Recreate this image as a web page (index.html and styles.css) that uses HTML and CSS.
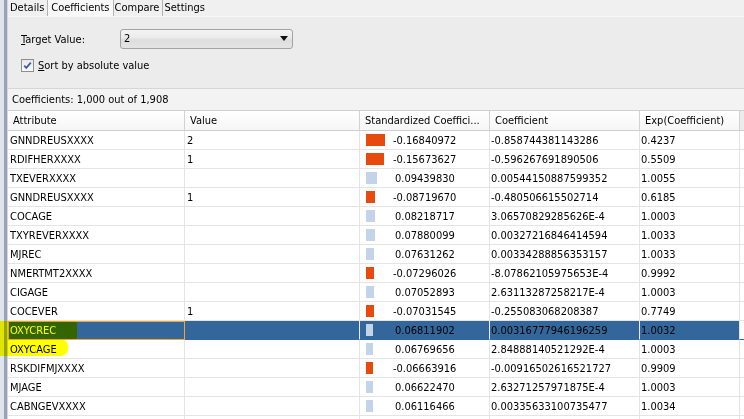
FILE: index.html
```html
<!DOCTYPE html>
<html>
<head>
<meta charset="utf-8">
<link rel="stylesheet" href="styles.css">
</head>
<body>
<div class="app">
  <div class="edge"></div>
  <div class="main">
    <div class="tabs">
      <div class="tab">Details</div>
      <div class="tab active">Coefficients</div>
      <div class="tab">Compare</div>
      <div class="tab">Settings</div>
    </div>
    <div class="options">
      <div class="target">
        <span class="label"><u>T</u>arget Value:</span>
        <div class="combo">
          <span class="combo-value">2</span>
          <svg class="combo-arrow" width="8" height="5" viewBox="0 0 8 5"><path d="M0 0H8L4 5Z" fill="#111"/></svg>
        </div>
      </div>
      <div class="sort">
        <span class="check">
          <svg width="11" height="11" viewBox="0 0 11 11"><path d="M2.2 5.6L4.3 7.8L8.8 2.6" fill="none" stroke="#3563a8" stroke-width="1.8"/></svg>
        </span>
        <span><u>S</u>ort by absolute value</span>
      </div>
    </div>
    <div class="summary">Coefficients: 1,000 out of 1,908</div>
    <div class="grid">
      <div class="row head">
        <div class="cell">Attribute</div>
        <div class="cell">Value</div>
        <div class="cell">Standardized Coeffici...</div>
        <div class="cell">Coefficient</div>
        <div class="cell">Exp(Coefficient)</div>
        <div class="cell fill"></div>
      </div>
      <div class="row">
        <div class="cell attr">GNNDREUSXXXX</div><div class="cell val">2</div>
        <div class="cell std"><span class="barbox"><span class="bar neg" style="width:19px"></span></span><span>-0.16840972</span></div>
        <div class="cell coef">-0.858744381143286</div><div class="cell exp">0.4237</div><div class="cell fill"></div>
      </div>
      <div class="row">
        <div class="cell attr">RDIFHERXXXX</div><div class="cell val">1</div>
        <div class="cell std"><span class="barbox"><span class="bar neg" style="width:18px"></span></span><span>-0.15673627</span></div>
        <div class="cell coef">-0.596267691890506</div><div class="cell exp">0.5509</div><div class="cell fill"></div>
      </div>
      <div class="row">
        <div class="cell attr">TXEVERXXXX</div><div class="cell val"></div>
        <div class="cell std"><span class="barbox"><span class="bar pos" style="width:11px"></span></span><span class="posnum">0.09439830</span></div>
        <div class="cell coef">0.00544150887599352</div><div class="cell exp">1.0055</div><div class="cell fill"></div>
      </div>
      <div class="row">
        <div class="cell attr">GNNDREUSXXXX</div><div class="cell val">1</div>
        <div class="cell std"><span class="barbox"><span class="bar neg" style="width:9px"></span></span><span>-0.08719670</span></div>
        <div class="cell coef">-0.480506615502714</div><div class="cell exp">0.6185</div><div class="cell fill"></div>
      </div>
      <div class="row">
        <div class="cell attr">COCAGE</div><div class="cell val"></div>
        <div class="cell std"><span class="barbox"><span class="bar pos" style="width:9px"></span></span><span class="posnum">0.08218717</span></div>
        <div class="cell coef">3.06570829285626E-4</div><div class="cell exp">1.0003</div><div class="cell fill"></div>
      </div>
      <div class="row">
        <div class="cell attr">TXYREVERXXXX</div><div class="cell val"></div>
        <div class="cell std"><span class="barbox"><span class="bar pos" style="width:9px"></span></span><span class="posnum">0.07880099</span></div>
        <div class="cell coef">0.00327216846414594</div><div class="cell exp">1.0033</div><div class="cell fill"></div>
      </div>
      <div class="row">
        <div class="cell attr">MJREC</div><div class="cell val"></div>
        <div class="cell std"><span class="barbox"><span class="bar pos" style="width:8px"></span></span><span class="posnum">0.07631262</span></div>
        <div class="cell coef">0.00334288856353157</div><div class="cell exp">1.0033</div><div class="cell fill"></div>
      </div>
      <div class="row">
        <div class="cell attr">NMERTMT2XXXX</div><div class="cell val"></div>
        <div class="cell std"><span class="barbox"><span class="bar neg" style="width:8px"></span></span><span>-0.07296026</span></div>
        <div class="cell coef">-8.07862105975653E-4</div><div class="cell exp">0.9992</div><div class="cell fill"></div>
      </div>
      <div class="row">
        <div class="cell attr">CIGAGE</div><div class="cell val"></div>
        <div class="cell std"><span class="barbox"><span class="bar pos" style="width:8px"></span></span><span class="posnum">0.07052893</span></div>
        <div class="cell coef">2.63113287258217E-4</div><div class="cell exp">1.0003</div><div class="cell fill"></div>
      </div>
      <div class="row">
        <div class="cell attr">COCEVER</div><div class="cell val">1</div>
        <div class="cell std"><span class="barbox"><span class="bar neg" style="width:8px"></span></span><span>-0.07031545</span></div>
        <div class="cell coef">-0.255083068208387</div><div class="cell exp">0.7749</div><div class="cell fill"></div>
      </div>
      <div class="row selected">
        <div class="cell attr focus">OXYCREC</div><div class="cell val"></div>
        <div class="cell std"><span class="barbox"><span class="bar pos" style="width:7px"></span></span><span class="posnum">0.06811902</span></div>
        <div class="cell coef">0.00316777946196259</div><div class="cell exp">1.0032</div><div class="cell fill"></div>
      </div>
      <div class="row">
        <div class="cell attr">OXYCAGE</div><div class="cell val"></div>
        <div class="cell std"><span class="barbox"><span class="bar pos" style="width:7px"></span></span><span class="posnum">0.06769656</span></div>
        <div class="cell coef">2.84888140521292E-4</div><div class="cell exp">1.0003</div><div class="cell fill"></div>
      </div>
      <div class="row">
        <div class="cell attr">RSKDIFMJXXXX</div><div class="cell val"></div>
        <div class="cell std"><span class="barbox"><span class="bar neg" style="width:7px"></span></span><span>-0.06663916</span></div>
        <div class="cell coef">-0.00916502616521727</div><div class="cell exp">0.9909</div><div class="cell fill"></div>
      </div>
      <div class="row">
        <div class="cell attr">MJAGE</div><div class="cell val"></div>
        <div class="cell std"><span class="barbox"><span class="bar pos" style="width:7px"></span></span><span class="posnum">0.06622470</span></div>
        <div class="cell coef">2.63271257971875E-4</div><div class="cell exp">1.0003</div><div class="cell fill"></div>
      </div>
      <div class="row">
        <div class="cell attr">CABNGEVXXXX</div><div class="cell val"></div>
        <div class="cell std"><span class="barbox"><span class="bar pos" style="width:7px"></span></span><span class="posnum">0.06116466</span></div>
        <div class="cell coef">0.00335633100735477</div><div class="cell exp">1.0034</div><div class="cell fill"></div>
      </div>
      <div class="row">
        <div class="cell attr"></div><div class="cell val"></div>
        <div class="cell std"></div>
        <div class="cell coef"></div><div class="cell exp"></div><div class="cell fill"></div>
      </div>
    </div>
  </div>
</div>
<div class="marker m1"></div>
<div class="marker m2"></div>
</body>
</html>
```
FILE: styles.css
```css
html, body {
  margin: 0;
  padding: 0;
}
body {
  width: 744px;
  height: 419px;
  overflow: hidden;
  position: relative;
  background: #f0f0f0;
  font-family: "DejaVu Sans Condensed", "DejaVu Sans", sans-serif;
  font-stretch: condensed;
  font-size: 11px;
  color: #000;
}
.app {
  display: flex;
  height: 419px;
}
.edge {
  width: 8px;
  flex: none;
  background: linear-gradient(to right, #dfe5ec 0, #dfe5ec 4px, #98a4b4 4px, #98a4b4 7px, #cfd6de 7px, #cfd6de 8px);
}
.main {
  flex: 1;
  display: flex;
  flex-direction: column;
  min-width: 0;
}
.tabs {
  height: 16px;
  display: flex;
  align-items: stretch;
  background: #f0f0f0;
  padding-left: 1px;
}
.tab {
  display: flex;
  align-items: center;
  padding: 0 3px 1px 1px;
  border-right: 1px solid #b4b4b4;
  line-height: 14px;
}
.tab:first-child { padding-left: 1px; }
.tab.active {
  background: #f8f8f8;
  padding-left: 3px;
}
.tab:last-child { border-right: none; }
.options {
  height: 71px;
  background: #ececec;
  border-top: 1px solid #f7f7f7;
  padding-left: 13px;
  display: flex;
  flex-direction: column;
}
.target {
  margin-top: 12px;
  height: 20px;
  display: flex;
  align-items: center;
}
.label {
  width: 99px;
}
.combo {
  box-sizing: border-box;
  width: 173px;
  height: 20px;
  border: 1px solid #a3a3a3;
  border-radius: 3px;
  background: linear-gradient(to bottom, #f3f3f3 0%, #ececec 40%, #dedede 55%, #e4e4e4 100%);
  display: flex;
  align-items: center;
  justify-content: space-between;
  padding: 0 4px 0 3px;
}
.combo-value { line-height: 16px; }
.combo-arrow { display: block; margin-top: -1px; }
.sort {
  margin-top: 10px;
  height: 13px;
  display: flex;
  align-items: center;
  gap: 4px;
}
.check {
  width: 11px;
  height: 11px;
  border: 1px solid #8e8f8f;
  background: linear-gradient(to bottom, #e9e9e9, #fafafa);
  display: flex;
}
.summary {
  height: 21px;
  border-top: 1px solid #d6d6d6;
  background: #f3f3f3;
  padding-left: 4px;
  display: flex;
  align-items: center;
}
.grid {
  flex: 1;
  background: #fff;
  overflow: hidden;
}
.row {
  display: grid;
  grid-template-columns: 177px 175px 130px 150px 100px 1fr;
  height: 19px;
}
.cell {
  border-right: 1px solid #e4e4e4;
  border-bottom: 1px solid #e4e4e4;
  padding-left: 2px;
  display: flex;
  align-items: center;
  white-space: nowrap;
  overflow: hidden;
  min-width: 0;
}
.row.head {
  height: 20px;
  border-top: 1px solid #cfcfcf;
  background: linear-gradient(to bottom, #ffffff, #f5f5f5);
}
.row.head .cell {
  padding-left: 5px;
  border-right-color: #d2d2d2;
  border-bottom-color: #cfcfcf;
}
.row.head .fill { background: #ececec; }
.cell.fill { padding: 0; border-right: none; }
.cell.coef, .cell.exp { padding-left: 1px; }
.cell.std { padding-left: 6px; }
.barbox {
  width: 27px;
  flex: none;
  display: flex;
}
.bar {
  height: 12px;
  display: block;
}
.bar.neg { background: #e84a0e; }
.bar.pos { background: #c3d4ea; }
.posnum { padding-left: 2px; }
.row.selected .cell {
  background: #33669a;
  border-bottom-color: #33669a;
}
.row.selected .cell.val,
.row.selected .cell.std,
.row.selected .cell.coef {
  border-right-color: #e8eef5;
}
.row.selected .cell.fill { background: #fff; }
.cell.focus {
  color: #fff;
  outline: 1px solid #f2a531;
  outline-offset: -1px;
}
.marker {
  position: absolute;
  left: 0;
  background: #ffff00;
  mix-blend-mode: multiply;
}
.m1 {
  top: 321px;
  width: 77px;
  height: 18px;
  border-radius: 0 2px 2px 0;
}
.m2 {
  top: 339px;
  width: 68px;
  height: 17px;
  border-radius: 0 7px 7px 0;
}
```
